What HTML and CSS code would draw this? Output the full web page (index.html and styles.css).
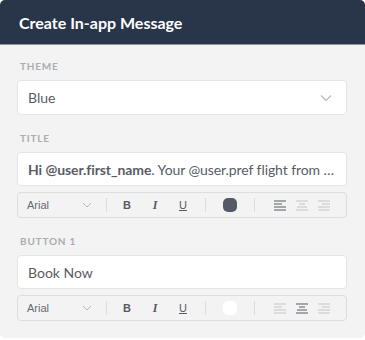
FILE: index.html
```html
<!DOCTYPE html>
<html>
<head>
<meta charset="utf-8">
<link rel="stylesheet" href="styles.css">
</head>
<body>
<div class="panel">
  <div class="header">Create In-app Message</div>
  <div class="content">
    <div class="label first">THEME</div>
    <div class="field select">
      <span>Blue</span>
      <svg class="chev" width="12" height="8" viewBox="0 0 12 8"><path d="M1 1.5 L6 6.5 L11 1.5" fill="none" stroke="#b5b9bf" stroke-width="1.2"/></svg>
    </div>

    <div class="label">TITLE</div>
    <div class="field text"><span class="clip"><b>Hi @user.first_name</b>. Your @user.pref flight from …</span></div>
    <div class="toolbar">
      <div class="font">Arial<svg class="chev-s" width="10" height="6" viewBox="0 0 10 6"><path d="M1 1 L5 5 L9 1" fill="none" stroke="#b5b9bf" stroke-width="1"/></svg></div>
      <div class="sep"></div>
      <div class="fmt b">B</div>
      <div class="fmt i">I</div>
      <div class="fmt u">U</div>
      <div class="sep"></div>
      <div class="swatchwrap"><div class="swatch dark"></div></div>
      <div class="sep"></div>
      <div class="aligns">
        <svg width="13" height="11" viewBox="0 0 13 11"><g stroke="#555a63" stroke-width="1.2"><path d="M0 1h12M0 4h8M0 7h12M0 10h12"/></g></svg>
        <svg width="13" height="11" viewBox="0 0 13 11"><g stroke="#c4c6ca" stroke-width="1.2"><path d="M0 1h12M3 4h6M1 7h10M0 10h12"/></g></svg>
        <svg width="13" height="11" viewBox="0 0 13 11"><g stroke="#c4c6ca" stroke-width="1.2"><path d="M0 1h12M4 4h8M0 7h12M0 10h12"/></g></svg>
      </div>
    </div>

    <div class="label">BUTTON 1</div>
    <div class="field text"><span>Book Now</span></div>
    <div class="toolbar">
      <div class="font">Arial<svg class="chev-s" width="10" height="6" viewBox="0 0 10 6"><path d="M1 1 L5 5 L9 1" fill="none" stroke="#b5b9bf" stroke-width="1"/></svg></div>
      <div class="sep"></div>
      <div class="fmt b">B</div>
      <div class="fmt i">I</div>
      <div class="fmt u">U</div>
      <div class="sep"></div>
      <div class="swatchwrap"><div class="swatch light"></div></div>
      <div class="sep"></div>
      <div class="aligns">
        <svg width="13" height="11" viewBox="0 0 13 11"><g stroke="#c4c6ca" stroke-width="1.2"><path d="M0 1h12M0 4h8M0 7h12M0 10h12"/></g></svg>
        <svg width="13" height="11" viewBox="0 0 13 11"><g stroke="#555a63" stroke-width="1.2"><path d="M0 1h12M3 4h6M1 7h10M0 10h12"/></g></svg>
        <svg width="13" height="11" viewBox="0 0 13 11"><g stroke="#c4c6ca" stroke-width="1.2"><path d="M0 1h12M4 4h8M0 7h12M0 10h12"/></g></svg>
      </div>
    </div>
  </div>
</div>
</body>
</html>
```
FILE: styles.css
```css
html, body {
  margin: 0;
  padding: 0;
  background: #ffffff;
}
body {
  font-family: "Lato", "Open Sans", sans-serif;
  color: #585c65;
}
.panel {
  width: 365px;
  height: 338px;
  background: #f3f3f3;
  border-radius: 5px;
  overflow: hidden;
}
.header {
  height: 44px;
  background: #293548;
  border-bottom: 1px solid #8d96a3;
  color: #ffffff;
  font-weight: 700;
  font-size: 16px;
  display: flex;
  align-items: center;
  padding-left: 19px;
}
.content {
  padding: 0 18px 0 17px;
}
.label {
  font-size: 10px;
  line-height: 12px;
  font-weight: 700;
  letter-spacing: 0.8px;
  color: #abadb0;
  padding-left: 3px;
  margin-top: 17px;
  margin-bottom: 8px;
}
.label.first {
  margin-top: 15px;
}
.field {
  background: #ffffff;
  border: 1px solid #e4e5e7;
  border-radius: 4px;
  height: 34px;
  box-sizing: border-box;
  display: flex;
  align-items: center;
  padding: 0 8px 0 10px;
  font-size: 14px;
}
.select {
  height: 35px;
  justify-content: space-between;
}
.select .chev {
  margin-right: 6px;
}
.clip {
  white-space: nowrap;
  overflow: hidden;
  letter-spacing: -0.08px;
}
.clip b {
  font-weight: 700;
}
.toolbar {
  margin-top: 6px;
  height: 26px;
  box-sizing: border-box;
  border: 1px solid #dcdde0;
  border-radius: 4px;
  display: flex;
  align-items: center;
  padding-left: 9px;
}
.font {
  width: 79px;
  box-sizing: border-box;
  font-family: "Liberation Sans", Arial, sans-serif;
  font-size: 11px;
  color: #666a70;
  display: flex;
  align-items: center;
  justify-content: space-between;
  padding-right: 14px;
}
.sep {
  width: 1px;
  height: 14px;
  background: #dcdde0;
}
.fmt {
  width: 28px;
  text-align: center;
  font-size: 11px;
  color: #555a63;
}
.fmt.b {
  margin-left: 6px;
  font-family: "Liberation Sans", sans-serif;
  font-weight: 700;
}
.fmt.i {
  font-family: "Liberation Serif", serif;
  font-style: italic;
  font-weight: 700;
  font-size: 12px;
}
.fmt.u {
  font-family: "Liberation Sans", sans-serif;
  text-decoration: underline;
  margin-right: 8px;
}
.swatchwrap {
  width: 48px;
  display: flex;
  justify-content: center;
}
.swatch {
  width: 14px;
  height: 14px;
  border-radius: 5px;
}
.swatch.dark {
  background: #555a66;
}
.swatch.light {
  background: #ffffff;
}
.aligns {
  display: flex;
  gap: 9px;
  margin-left: 19px;
}
```
